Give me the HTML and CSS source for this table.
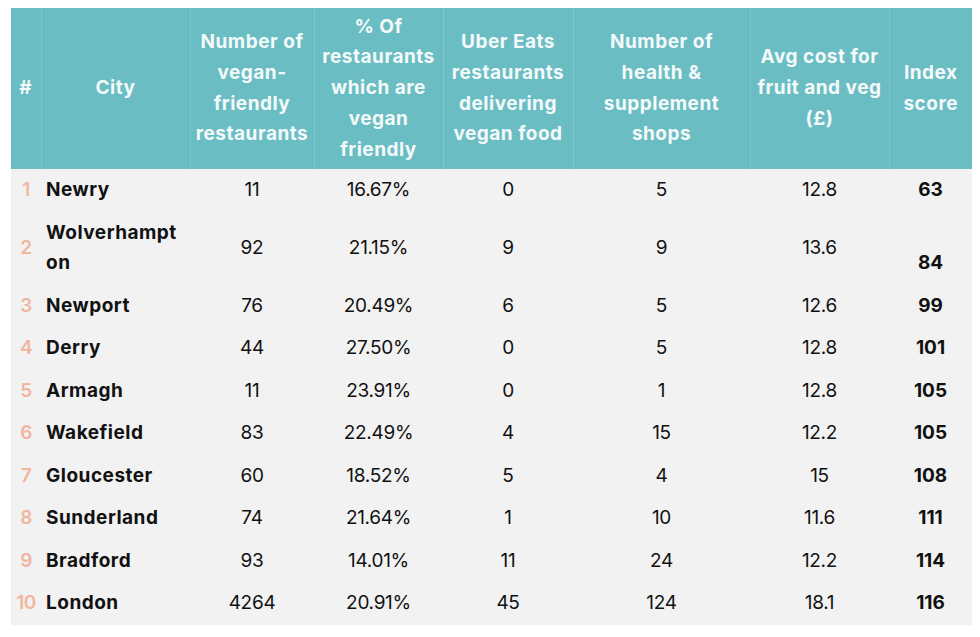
FILE: index.html
```html
<!DOCTYPE html>
<html>
<head>
<meta charset="utf-8">
<link rel="stylesheet" href="styles.css">
</head>
<body>
<table class="rank-table">
  <colgroup>
    <col class="c-rank"><col class="c-city"><col class="c-num"><col class="c-pct"><col class="c-uber"><col class="c-shop"><col class="c-cost"><col class="c-score">
  </colgroup>
  <thead>
    <tr>
      <th>#</th>
      <th>City</th>
      <th>Number of vegan-friendly restaurants</th>
      <th>% Of restaurants which are vegan friendly</th>
      <th>Uber Eats restaurants delivering vegan food</th>
      <th class="narrow">Number of health &amp; supplement shops</th>
      <th>Avg cost for fruit and veg (£)</th>
      <th>Index score</th>
    </tr>
  </thead>
  <tbody>
    <tr><td class="rank">1</td><td class="city">Newry</td><td>11</td><td>16.67%</td><td>0</td><td>5</td><td>12.8</td><td class="score">63</td></tr>
    <tr><td class="rank">2</td><td class="city">Wolverhampton</td><td>92</td><td>21.15%</td><td>9</td><td>9</td><td>13.6</td><td class="score"><br>84</td></tr>
    <tr><td class="rank">3</td><td class="city">Newport</td><td>76</td><td>20.49%</td><td>6</td><td>5</td><td>12.6</td><td class="score">99</td></tr>
    <tr><td class="rank">4</td><td class="city">Derry</td><td>44</td><td>27.50%</td><td>0</td><td>5</td><td>12.8</td><td class="score">101</td></tr>
    <tr><td class="rank">5</td><td class="city">Armagh</td><td>11</td><td>23.91%</td><td>0</td><td>1</td><td>12.8</td><td class="score">105</td></tr>
    <tr><td class="rank">6</td><td class="city">Wakefield</td><td>83</td><td>22.49%</td><td>4</td><td>15</td><td>12.2</td><td class="score">105</td></tr>
    <tr><td class="rank">7</td><td class="city">Gloucester</td><td>60</td><td>18.52%</td><td>5</td><td>4</td><td>15</td><td class="score">108</td></tr>
    <tr><td class="rank">8</td><td class="city">Sunderland</td><td>74</td><td>21.64%</td><td>1</td><td>10</td><td>11.6</td><td class="score">111</td></tr>
    <tr><td class="rank">9</td><td class="city">Bradford</td><td>93</td><td>14.01%</td><td>11</td><td>24</td><td>12.2</td><td class="score">114</td></tr>
    <tr><td class="rank">10</td><td class="city">London</td><td>4264</td><td>20.91%</td><td>45</td><td>124</td><td>18.1</td><td class="score">116</td></tr>
  </tbody>
</table>
</body>
</html>
```
FILE: styles.css
```css
html, body {
  margin: 0;
  background: #ffffff;
}
body {
  padding: 8px 0 0 11px;
  font-family: Inter, "DejaVu Sans", sans-serif;
  color: #111111;
}
.rank-table {
  border-collapse: collapse;
  table-layout: fixed;
  width: 961px;
  font-size: 19px;
}
.c-rank { width: 30px; }
.c-city { width: 149px; }
.c-num { width: 124px; }
.c-pct { width: 129px; }
.c-uber { width: 130px; }
.c-shop { width: 177px; }
.c-cost { width: 139px; }
.c-score { width: 83px; }

.rank-table th {
  background: #6bbdc4;
  color: #f4fafa;
  font-weight: 700;
  letter-spacing: 0.5px;
  line-height: 30.8px;
  height: 161px;
  padding: 0 2px;
  text-align: center;
  vertical-align: middle;
  border-left: 1px solid #7fc6cc;
  box-sizing: border-box;
}
.rank-table th:first-child { border-left: none; }
.rank-table th.narrow { padding: 0 24px; }

.rank-table td {
  background: #f2f2f2;
  line-height: 30.5px;
  padding: 6px 3px;
  text-align: center;
  vertical-align: middle;
  font-weight: 400;
  letter-spacing: -0.3px;
}
.rank-table td.rank {
  color: #f0b69e;
  font-weight: 600;
  padding: 6px 0;
  letter-spacing: -0.5px;
}
.rank-table td.city {
  text-align: left;
  font-weight: 700;
  letter-spacing: 0.5px;
  padding: 6px 8px 6px 5px;
  word-break: break-all;
}
.rank-table td.score {
  font-weight: 700;
  letter-spacing: 0;
}
```
